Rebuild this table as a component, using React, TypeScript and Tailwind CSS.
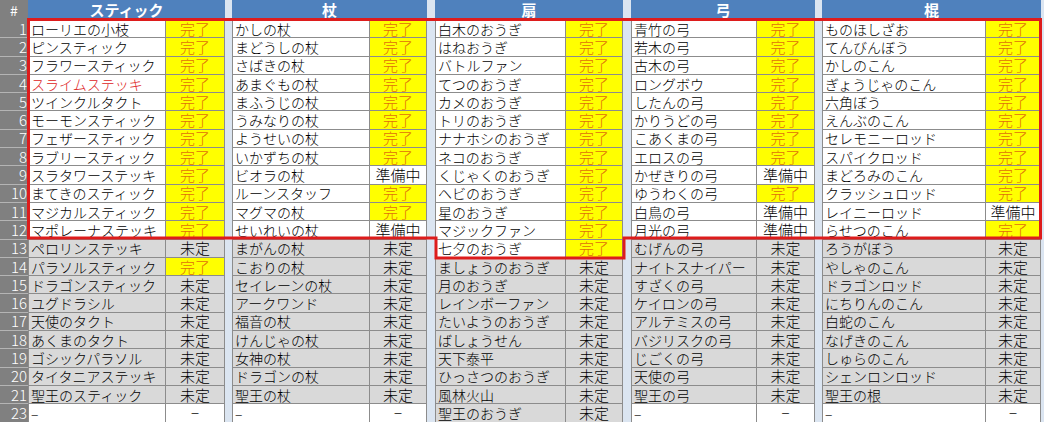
import React from "react"

type Status = "完了" | "準備中" | "未定" | "−"

interface Group {
  title: string
  width: string
  statusWidth: string
  lit: number
  rows: [string, Status][]
}

const groups: Group[] = [
  {
    title: "スティック",
    width: "w-[197px]",
    statusWidth: "w-[58px]",
    lit: 12,
    rows: [
      ["ローリエの小枝", "完了"],
      ["ピンスティック", "完了"],
      ["フラワースティック", "完了"],
      ["スライムステッキ", "完了"],
      ["ツインクルタクト", "完了"],
      ["モーモンスティック", "完了"],
      ["フェザースティック", "完了"],
      ["ラブリースティック", "完了"],
      ["スラタワーステッキ", "完了"],
      ["まてきのスティック", "完了"],
      ["マジカルスティック", "完了"],
      ["マポレーナステッキ", "完了"],
      ["ペロリンステッキ", "未定"],
      ["パラソルスティック", "完了"],
      ["ドラゴンスティック", "未定"],
      ["ユグドラシル", "未定"],
      ["天使のタクト", "未定"],
      ["あくまのタクト", "未定"],
      ["ゴシックパラソル", "未定"],
      ["タイタニアステッキ", "未定"],
      ["聖王のスティック", "未定"],
      ["–", "−"],
    ],
  },
  {
    title: "杖",
    width: "w-[195px]",
    statusWidth: "w-[56px]",
    lit: 12,
    rows: [
      ["かしの杖", "完了"],
      ["まどうしの杖", "完了"],
      ["さばきの杖", "完了"],
      ["あまぐもの杖", "完了"],
      ["まふうじの杖", "完了"],
      ["うみなりの杖", "完了"],
      ["ようせいの杖", "完了"],
      ["いかずちの杖", "完了"],
      ["ビオラの杖", "準備中"],
      ["ルーンスタッフ", "完了"],
      ["マグマの杖", "完了"],
      ["せいれいの杖", "準備中"],
      ["まがんの杖", "未定"],
      ["こおりの杖", "未定"],
      ["セイレーンの杖", "未定"],
      ["アークワンド", "未定"],
      ["福音の杖", "未定"],
      ["けんじゃの杖", "未定"],
      ["女神の杖", "未定"],
      ["ドラゴンの杖", "未定"],
      ["聖王の杖", "未定"],
      ["–", "−"],
    ],
  },
  {
    title: "扇",
    width: "w-[188px]",
    statusWidth: "w-[56px]",
    lit: 13,
    rows: [
      ["白木のおうぎ", "完了"],
      ["はねおうぎ", "完了"],
      ["バトルファン", "完了"],
      ["てつのおうぎ", "完了"],
      ["カメのおうぎ", "完了"],
      ["トリのおうぎ", "完了"],
      ["ナナホシのおうぎ", "完了"],
      ["ネコのおうぎ", "完了"],
      ["くじゃくのおうぎ", "完了"],
      ["ヘビのおうぎ", "完了"],
      ["星のおうぎ", "完了"],
      ["マジックファン", "完了"],
      ["七夕のおうぎ", "完了"],
      ["ましょうのおうぎ", "未定"],
      ["月のおうぎ", "未定"],
      ["レインボーファン", "未定"],
      ["たいようのおうぎ", "未定"],
      ["ばしょうせん", "未定"],
      ["天下泰平", "未定"],
      ["ひっさつのおうぎ", "未定"],
      ["風林火山", "未定"],
      ["聖王のおうぎ", "未定"],
    ],
  },
  {
    title: "弓",
    width: "w-[184px]",
    statusWidth: "w-[57px]",
    lit: 12,
    rows: [
      ["青竹の弓", "完了"],
      ["若木の弓", "完了"],
      ["古木の弓", "完了"],
      ["ロングボウ", "完了"],
      ["したんの弓", "完了"],
      ["かりうどの弓", "完了"],
      ["こあくまの弓", "完了"],
      ["エロスの弓", "完了"],
      ["かぜきりの弓", "準備中"],
      ["ゆうわくの弓", "完了"],
      ["白鳥の弓", "準備中"],
      ["月光の弓", "準備中"],
      ["むげんの弓", "未定"],
      ["ナイトスナイパー", "未定"],
      ["すざくの弓", "未定"],
      ["ケイロンの弓", "未定"],
      ["アルテミスの弓", "未定"],
      ["バジリスクの弓", "未定"],
      ["じごくの弓", "未定"],
      ["天使の弓", "未定"],
      ["聖王の弓", "未定"],
      ["–", "−"],
    ],
  },
  {
    title: "棍",
    width: "w-[219px]",
    statusWidth: "w-[54px]",
    lit: 12,
    rows: [
      ["ものほしざお", "完了"],
      ["てんびんぼう", "完了"],
      ["かしのこん", "完了"],
      ["ぎょうじゃのこん", "完了"],
      ["六角ぼう", "完了"],
      ["えんぶのこん", "完了"],
      ["セレモニーロッド", "完了"],
      ["スパイクロッド", "完了"],
      ["まどろみのこん", "完了"],
      ["クラッシュロッド", "完了"],
      ["レイニーロッド", "準備中"],
      ["らせつのこん", "完了"],
      ["ろうがぼう", "未定"],
      ["やしゃのこん", "未定"],
      ["ドラゴンロッド", "未定"],
      ["にちりんのこん", "未定"],
      ["白蛇のこん", "未定"],
      ["なげきのこん", "未定"],
      ["しゅらのこん", "未定"],
      ["シェンロンロッド", "未定"],
      ["聖王の根", "未定"],
      ["–", "−"],
    ],
  },
]

const rowNumbers = [...Array(21)].map((_, i) => String(i + 1)).concat("23")

const font = { fontFamily: '"Noto Sans CJK JP", "Noto Sans", sans-serif' }

function statusClass(s: Status) {
  if (s === "完了") return "bg-[#ffff00] text-[#e0700a]"
  if (s === "未定") return "bg-[#d9d9d9] text-black"
  return "bg-white text-black"
}

function GroupColumn({ group }: { group: Group }) {
  return (
    <div className={`${group.width} flex flex-col`}>
      <div className="h-[20px] bg-[#4f81bd] text-white font-bold text-[15px] leading-[18px] flex items-center justify-center">
        {group.title}
      </div>
      {group.rows.map(([name, status], i) => {
        const white = i < group.lit || name === "–"
        const red = name === "スライムステッキ"
        return (
          <div key={i} className="flex h-[18.3px] border-x border-b border-[#8c8c8c]">
            <div
              className={`flex-1 flex items-center pl-[2px] border-r border-[#8c8c8c] text-[14px] font-light leading-[16px] whitespace-nowrap overflow-hidden ${
                white ? "bg-white" : "bg-[#d9d9d9]"
              } ${red ? "text-[#dd2222]" : "text-black"}`}
            >
              {name}
            </div>
            <div
              className={`${group.statusWidth} flex items-center justify-center text-[15px] font-light leading-[16px] ${statusClass(status)}`}
            >
              {status}
            </div>
          </div>
        )
      })}
    </div>
  )
}

export default function App() {
  return (
    <div className="relative w-[1044px] h-[422px] overflow-hidden bg-[#dbe5f1]" style={font}>
      <div className="flex">
        <div className="w-[28px] flex flex-col">
          <div className="h-[20px] bg-[#808080] text-white text-[14px] leading-[16px] flex items-center justify-center">
            #
          </div>
          {rowNumbers.map((n) => (
            <div
              key={n}
              className="h-[18.3px] bg-[#808080] border-b border-[#b4b4b4] text-white text-[15px] font-light leading-[16px] flex items-center justify-end pr-[1px]"
            >
              {n}
            </div>
          ))}
        </div>
        <GroupColumn group={groups[0]} />
        <div className="w-[7px]" />
        <GroupColumn group={groups[1]} />
        <div className="w-[8px]" />
        <GroupColumn group={groups[2]} />
        <div className="w-[8px]" />
        <GroupColumn group={groups[3]} />
        <div className="w-[7px]" />
        <GroupColumn group={groups[4]} />
      </div>

      {/* red outline around finished rows */}
      <svg className="absolute left-0 top-0 pointer-events-none" width="1044" height="422">
        <path
          d="M28.5 19.5 H1040.5 V238 H624 V258 H436 V238 H28.5 Z"
          fill="none"
          stroke="#dd1c1c"
          strokeWidth="3"
        />
      </svg>
    </div>
  )
}
